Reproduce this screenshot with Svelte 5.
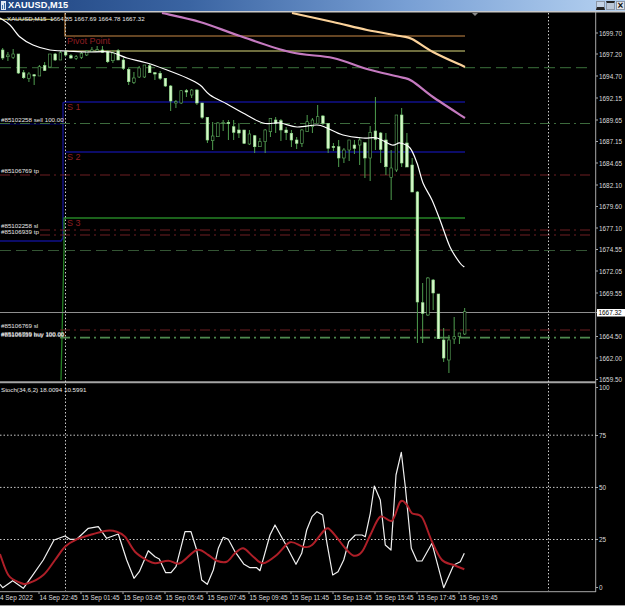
<script lang="ts">
  const step = 5.25;
  const startX = 2.67;

  // [open edge, close edge, high, low, filled] in chart pixels
  const rawCandles = [
    [50, 58, 48, 60, 1], [55, 56.7, 52, 61, 0], [54, 57.5, 49, 59, 0], [54, 73, 54, 74, 1],
    [72.7, 77.7, 70, 79, 1], [74, 78.5, 72, 82, 0], [74.7, 76, 74, 85, 1], [66.7, 76, 65, 76, 0],
    [65.5, 70.5, 62, 71, 1], [54, 67, 54, 68, 0], [54, 60, 53, 61, 1], [52.7, 60, 51, 60, 0],
    [51.7, 55, 50, 56, 1], [55.7, 58, 54, 59, 1], [56.7, 58.3, 55, 60, 0], [53.3, 57.3, 52, 59, 0],
    [50.7, 55, 50, 56, 0], [50, 51.7, 47, 52, 0], [49.5, 51, 46, 52, 0], [50, 52.3, 46, 53, 1],
    [51.7, 61.7, 50, 63, 1], [53, 60.7, 50, 63, 0], [50.7, 60, 49, 60, 1], [60, 68.3, 58, 70, 1],
    [69.3, 81.7, 68, 85, 1], [78, 82.3, 72, 84, 0], [68, 77, 66, 78, 0], [65, 77, 65, 78, 0],
    [65.7, 72.7, 64, 73, 1], [72.7, 74, 72, 80, 1], [73.3, 78.3, 71, 80, 1], [78.3, 86, 78, 87, 1],
    [86, 101, 85, 111, 1], [101.7, 103, 100, 108, 0], [90.7, 103, 90, 104, 0], [90.7, 92, 89, 97, 1],
    [90, 95, 89, 98, 0], [90, 103, 89, 105, 1], [103, 117.3, 103, 119, 1], [117.3, 140, 117, 143, 1],
    [136, 140.7, 122, 150, 0], [123, 136.7, 122, 137, 0], [122.3, 123.3, 120, 131, 0], [122.3, 123.6, 120, 140, 1],
    [126.7, 132.3, 120, 140, 1], [130, 133, 123, 138, 1], [130, 143.3, 130, 144, 1], [134, 144, 130, 145, 0],
    [135.7, 146.7, 135, 153, 1], [141.7, 146.7, 138, 147, 0], [130, 141.7, 129, 153, 0], [118.3, 131.7, 118, 137, 0],
    [120, 123.3, 117, 133, 1], [120.7, 130, 119, 141, 1], [130, 132.7, 127, 140, 1], [133.3, 140, 130, 147, 1],
    [140, 143.3, 137, 149, 1], [130, 143.3, 129, 147, 0], [121.7, 131.7, 115, 132, 0], [120, 126.7, 118, 133, 0],
    [116.7, 123.3, 105, 123, 0], [116, 123.3, 115, 125, 1], [123.3, 148.3, 123, 153, 1], [146.5, 147.3, 143, 151, 1],
    [146.7, 158, 140, 167, 1], [150, 158, 148, 163, 0], [140, 150, 141, 161, 0], [145, 148.3, 140, 154, 1],
    [140, 145, 138, 165, 0], [142.7, 158, 143, 178, 1], [132.3, 158, 126, 181, 0], [131, 139.3, 97, 150, 1],
    [133, 149.3, 132, 163, 1], [140, 166.7, 133, 175, 1], [168, 177.3, 150, 200, 0], [115, 170, 115, 172, 0],
    [115, 163, 108, 167, 1], [143, 167, 133, 167, 1], [165, 192, 158, 192, 1], [192, 302, 191, 343, 1],
    [302.7, 313.3, 283, 343, 1], [278, 315, 277, 316, 0], [280, 293, 279, 310, 1], [294, 338.7, 294, 339, 1],
    [340, 358, 328, 362, 1], [340, 360, 335, 373, 0], [336.7, 339, 317, 344, 0], [333, 336.7, 333, 344, 0],
    [311.7, 334, 308, 335, 0],
  ];

  const candles = rawCandles.map(([top, bottom, high, low, filled], i) => ({
    x: startX + i * step,
    top,
    bottom,
    high,
    low,
    filled: filled === 1,
  }));

  const maLine = [[0,18],[10,25],[20,37],[33,45],[50,50],[67,51],[87,52],[110,52],[127,58],[147,63],[167,70],[187,78],[200,85],[210,95],[227,104],[243,113],[263,123],[280,123],[297,127],[317,125],[327,128],[343,135],[363,138],[377,138],[392,145],[400,143],[410,148],[417,163],[423,183],[432,200],[440,220],[450,247],[460,263],[464.3,267]];
  const peachLine = [[292,13],[333,22],[367,30],[400,36],[412,39],[433,52],[465,67]];
  const pinkLine = [[162,13],[200,22],[240,36],[290,52],[333,58],[367,69],[400,77],[412,81],[433,97],[465,118]];

  const stochMain = [[0,584.3],[2.7,587.7],[12.7,580.7],[23.3,588.3],[31.7,576.7],[43.3,560],[54,540],[65,536],[70,539.3],[76.7,539.3],[88.3,528.3],[98.3,526.7],[106.7,538.3],[118.3,534],[126.7,560],[134,578.3],[139.3,571.7],[148.3,550.7],[155,556.7],[159.3,559],[165.7,572.7],[171,572.7],[176,566.7],[185,531.7],[191,531.7],[196.7,550],[201.7,580],[207.3,584.3],[213.3,570],[218.3,548.3],[223.3,537.3],[228.3,539.3],[235,551.7],[244,564.3],[250,567.7],[256.7,567.7],[260,570.7],[270,535],[275,525],[285,543.3],[296,564.3],[301.7,553.3],[306.7,530],[312,516.7],[317,511.7],[322.7,515],[327,543.3],[332.7,575],[338,571.7],[343.7,560],[348.7,541.7],[355.3,535],[362,535],[365.3,536.7],[370.3,513.3],[374.3,486],[380.3,500],[385.3,545],[391,550],[396,475],[401.3,452.3],[405.3,486.7],[411.3,548.3],[417,561],[422,561],[432,543.3],[443.7,587.7],[453.7,565],[460.3,561.7],[464.3,553.3]];
  const stochSignal = [[0,554],[8.3,575],[20,582.7],[28.3,583.3],[43.3,575],[55,560],[65,546.7],[76.7,539.3],[93.3,534],[106.7,530.7],[116.7,531.7],[125,536.7],[135,551.7],[146.7,560],[155,563.3],[168.3,560.7],[180,563.3],[196.7,550],[208.3,555],[216.7,560.7],[226.7,561.7],[235,553.3],[243.3,548.3],[253.3,556.7],[263.3,563.3],[276.7,555],[290,542.3],[303.3,546.7],[312,545],[325.3,529.3],[332,531.7],[345.3,548.3],[353.7,555.7],[362,551.7],[370.3,535],[380.3,516.7],[392,520.7],[400.3,501.7],[407,505],[412,513.3],[422,517.3],[432,541.7],[442,560],[453.7,565],[464.3,569.3]];

  function poly(points: number[][]) {
    return points.map((p) => p.join(",")).join(" ");
  }

  // catmull-rom through the points, the red signal and the moving averages are smooth
  function smooth(points: number[][]) {
    let d = `M${points[0][0]} ${points[0][1]}`;
    for (let i = 0; i < points.length - 1; i++) {
      const p0 = points[Math.max(i - 1, 0)];
      const p1 = points[i];
      const p2 = points[i + 1];
      const p3 = points[Math.min(i + 2, points.length - 1)];
      const c1x = p1[0] + (p2[0] - p0[0]) / 6;
      const c1y = p1[1] + (p2[1] - p0[1]) / 6;
      const c2x = p2[0] - (p3[0] - p1[0]) / 6;
      const c2y = p2[1] - (p3[1] - p1[1]) / 6;
      d += ` C${c1x.toFixed(1)} ${c1y.toFixed(1)} ${c2x.toFixed(1)} ${c2y.toFixed(1)} ${p2[0]} ${p2[1]}`;
    }
    return d;
  }

  const priceLabels = [
    ["1699.70", 33], ["1697.20", 54], ["1694.70", 76], ["1692.15", 98], ["1689.65", 120],
    ["1687.15", 141.5], ["1684.65", 163], ["1682.10", 185], ["1679.60", 206.5], ["1677.10", 228],
    ["1674.55", 249.5], ["1672.05", 271], ["1669.55", 293], ["1664.50", 336.5], ["1662.00", 358],
    ["1659.50", 379.5],
  ];
  const stochLabels = [["100", 387.5], ["75", 435.5], ["50", 487.5], ["25", 539.5], ["0", 587.5]];
  const timeLabels = [
    ["14 Sep 22:45", 39], ["15 Sep 01:45", 81], ["15 Sep 03:45", 123], ["15 Sep 05:45", 165],
    ["15 Sep 07:45", 207], ["15 Sep 09:45", 249], ["15 Sep 11:45", 291], ["15 Sep 13:45", 333],
    ["15 Sep 15:45", 375], ["15 Sep 17:45", 417], ["15 Sep 19:45", 459],
  ];
  const orderLabels = [
    ["#85102258 sell 100.00", 122], ["#85106769 tp", 173], ["#85102258 sl", 228], ["#85106939 tp", 234],
    ["#85106769 sl", 328], ["#85106769 buy 100.00", 336], ["#85106939 buy 100.00", 336.5],
  ];
</script>

<div class="terminal">
  <header class="titlebar">
    <svg class="app-icon" width="5" height="9" viewBox="0 0 5 9">
      <rect width="5" height="9" fill="#dfe8f4" />
      <rect x="1" y="4" width="1" height="4" fill="#3a6ea5" />
      <rect x="3" y="2" width="1" height="6" fill="#3a6ea5" />
    </svg>
    <span class="title">XAUUSD,M15</span>
    <div class="controls">
      <span class="control min"></span>
      <span class="control max"></span>
      <span class="control close">×</span>
    </div>
  </header>

  <svg class="chart" width="625" height="595" viewBox="0 11 625 595">
    <!-- separators and axes -->
    <rect x="0" y="11" width="625" height="1.5" fill="#c9c9c9" />
    <line x1="0" y1="382.3" x2="596" y2="382.3" stroke="#a5a5a5" stroke-width="2" />
    <line x1="0" y1="591.7" x2="596" y2="591.7" stroke="#a8a8a8" />
    <line x1="595.7" y1="12" x2="595.7" y2="592" stroke="#a8a8a8" />
    <line x1="0" y1="605.5" x2="625" y2="605.5" stroke="#9a9a9a" />

    <!-- stochastic levels -->
    {#each [435.2, 487.4, 539.5] as y}
      <line x1="0" y1={y} x2="596" y2={y} class="dots" />
    {/each}

    <!-- pivot levels -->
    <polyline points="65,13 65,36 465,36" fill="none" stroke="#c98a46" stroke-width="1.2" />
    <line x1="65" y1="51" x2="465" y2="51" stroke="#dcd97c" stroke-width="1.2" />
    <line x1="0" y1="19.3" x2="54" y2="19.3" stroke="#d8d26a" stroke-width="1" />
    <polyline points="0,124 63,124" fill="none" stroke="#00006e" />
    <polyline points="0,241 61,241 63,238 63,103 65,102 465,102" fill="none" stroke="#10108c" stroke-width="1.4" />
    <line x1="65" y1="152" x2="465" y2="152" stroke="#10108c" stroke-width="1.4" />
    <polyline points="61,380 64,250 64,218 465,218" fill="none" stroke="#248224" stroke-width="1.3" />

    <!-- order levels -->
    <line x1="0" y1="67.7" x2="592" y2="67.7" class="long-dash" />
    <line x1="0" y1="123.5" x2="592" y2="123.5" class="dash-dot green" />
    <line x1="0" y1="175" x2="592" y2="175" class="dash-dot red" />
    <line x1="40" y1="230" x2="592" y2="230" class="dash-dot red" />
    <line x1="40" y1="235" x2="592" y2="235" class="dash-dot red" />
    <line x1="0" y1="250.5" x2="592" y2="250.5" class="long-dash thin" />
    <line x1="0" y1="312.5" x2="597" y2="312.5" stroke="#8f8f8f" />
    <line x1="60" y1="330" x2="592" y2="330" class="dash-dot red" />
    <line x1="60" y1="337.6" x2="592" y2="337.6" class="dash-dot green heavy" />

    <!-- vertical period separators -->
    <line x1="65.5" y1="13" x2="65.5" y2="591" class="dots" />
    <line x1="548.5" y1="13" x2="548.5" y2="591" class="dots" />

    <!-- candles -->
    {#each candles as c}
      <line x1={c.x} y1={c.high} x2={c.x} y2={c.low} stroke="#4f9e4f" />
      <rect
        x={c.x - 1.3}
        y={c.top}
        width="2.6"
        height={Math.max(c.bottom - c.top, 1)}
        fill={c.filled ? "#d5f7c8" : "#000"}
        stroke={c.filled ? "#8fd98a" : "#5fae5f"}
        stroke-width="0.6"
      />
    {/each}

    <!-- moving averages -->
    <path d={smooth(peachLine)} fill="none" stroke="#fbd29a" stroke-width="2.2" />
    <path d={smooth(pinkLine)} fill="none" stroke="#c57ac0" stroke-width="2.2" />
    <path d={smooth(maLine)} fill="none" stroke="#fff" stroke-width="1.2" />

    <!-- stochastic -->
    <polyline points={poly(stochMain)} fill="none" stroke="#f0f0f0" stroke-width="1.2" stroke-linejoin="round" />
    <path d={smooth(stochSignal)} fill="none" stroke="#ae1f28" stroke-width="2" />

    <!-- marker at the top -->
    <polygon points="472,13 478,13 475,16" fill="#8a8a8a" />

    <!-- texts on the chart -->
    <text x="7" y="21" class="small">XAUUSD,M15&nbsp;&nbsp;1664.85 1667.69 1664.78 1667.32</text>
    <text x="67" y="44" class="level">Pivot Point</text>
    <text x="67" y="110" class="level">S 1</text>
    <text x="67" y="160" class="level">S 2</text>
    <text x="67" y="226" class="level">S 3</text>
    {#each orderLabels as [label, y]}
      <text x="1" {y} class="small">{label}</text>
    {/each}
    <text x="1" y="392" class="small">Stoch(34,6,2) 18.0094 10.5991</text>

    <!-- price axis -->
    {#each priceLabels as [label, y]}
      <line x1="596" y1={y} x2="598" y2={y} stroke="#a8a8a8" />
      <text x="599" y={Number(y) + 2.5} class="axis">{label}</text>
    {/each}
    <rect x="597" y="309" width="28" height="7.5" fill="#fff" />
    <text x="598.5" y="315" class="tag">1667.32</text>
    {#each stochLabels as [label, y]}
      <line x1="596" y1={y} x2="598" y2={y} stroke="#a8a8a8" />
      <text x="599" y={Number(y) + 2.5} class="axis">{label}</text>
    {/each}

    <!-- time axis -->
    <text x="0" y="600" class="axis">4 Sep 2022</text>
    {#each timeLabels as [label, x]}
      <line x1={x} y1="592" x2={x} y2="594" stroke="#a8a8a8" />
      <text x={Number(x) + 0.5} y="600" class="axis">{label}</text>
    {/each}
  </svg>
</div>

<style>
  :global(body) {
    background: #000;
  }

  .terminal {
    width: 625px;
    height: 606px;
    display: flex;
    flex-direction: column;
    overflow: hidden;
    background: #000;
    font-family: "Liberation Sans", Arial, sans-serif;
  }

  .titlebar {
    height: 11px;
    flex: none;
    display: flex;
    align-items: center;
    gap: 2px;
    padding-left: 1px;
    background: linear-gradient(90deg, #1f4480 0%, #3a64a2 30%, #789fd4 65%, #b6d2f1 100%);
    overflow: hidden;
  }

  .title {
    color: #fff;
    font-size: 9.2px;
    font-weight: 700;
    line-height: 11px;
    letter-spacing: 0.1px;
    font-family: "Liberation Sans", Arial, sans-serif;
  }

  .controls {
    margin-left: auto;
    display: flex;
    gap: 1px;
    padding-right: 0;
  }

  .control {
    width: 9px;
    height: 9px;
    box-sizing: border-box;
    background: #dfe3e8;
    border: 1px solid #8c97a6;
    color: #111;
    font-size: 10px;
    font-weight: 700;
    line-height: 7px;
    text-align: center;
  }

  .control.min {
    border-bottom: 3px solid #222;
    background: #c4d3e6;
  }

  .control.max {
    border-top: 2px solid #222;
    background: #b9c6d6;
  }

  .chart {
    display: block;
    flex: none;
    shape-rendering: geometricPrecision;
  }

  .dots {
    stroke: #c9c9c9;
    stroke-width: 1;
    stroke-dasharray: 1.5 2;
  }

  .long-dash {
    stroke: #2f5a2f;
    stroke-width: 1.2;
    stroke-dasharray: 11 5;
  }

  .long-dash.thin {
    stroke: #3a5f3a;
    stroke-width: 0.9;
  }

  .dash-dot {
    stroke-width: 1;
    stroke-dasharray: 10 4 2 4;
  }

  .dash-dot.green {
    stroke: #3c6a3c;
  }

  .dash-dot.green.heavy {
    stroke: #4f8a4f;
    stroke-width: 1.6;
  }

  .dash-dot.red {
    stroke: #6e1e22;
  }

  text {
    font-family: "Liberation Sans", Arial, sans-serif;
  }

  .small {
    font-size: 6.2px;
    fill: #e8e8e8;
  }

  .level {
    font-size: 9px;
    fill: #8e1f22;
  }

  .axis {
    font-size: 6.4px;
    fill: #dcdcdc;
  }

  .tag {
    font-size: 6.4px;
    fill: #000;
  }
</style>
